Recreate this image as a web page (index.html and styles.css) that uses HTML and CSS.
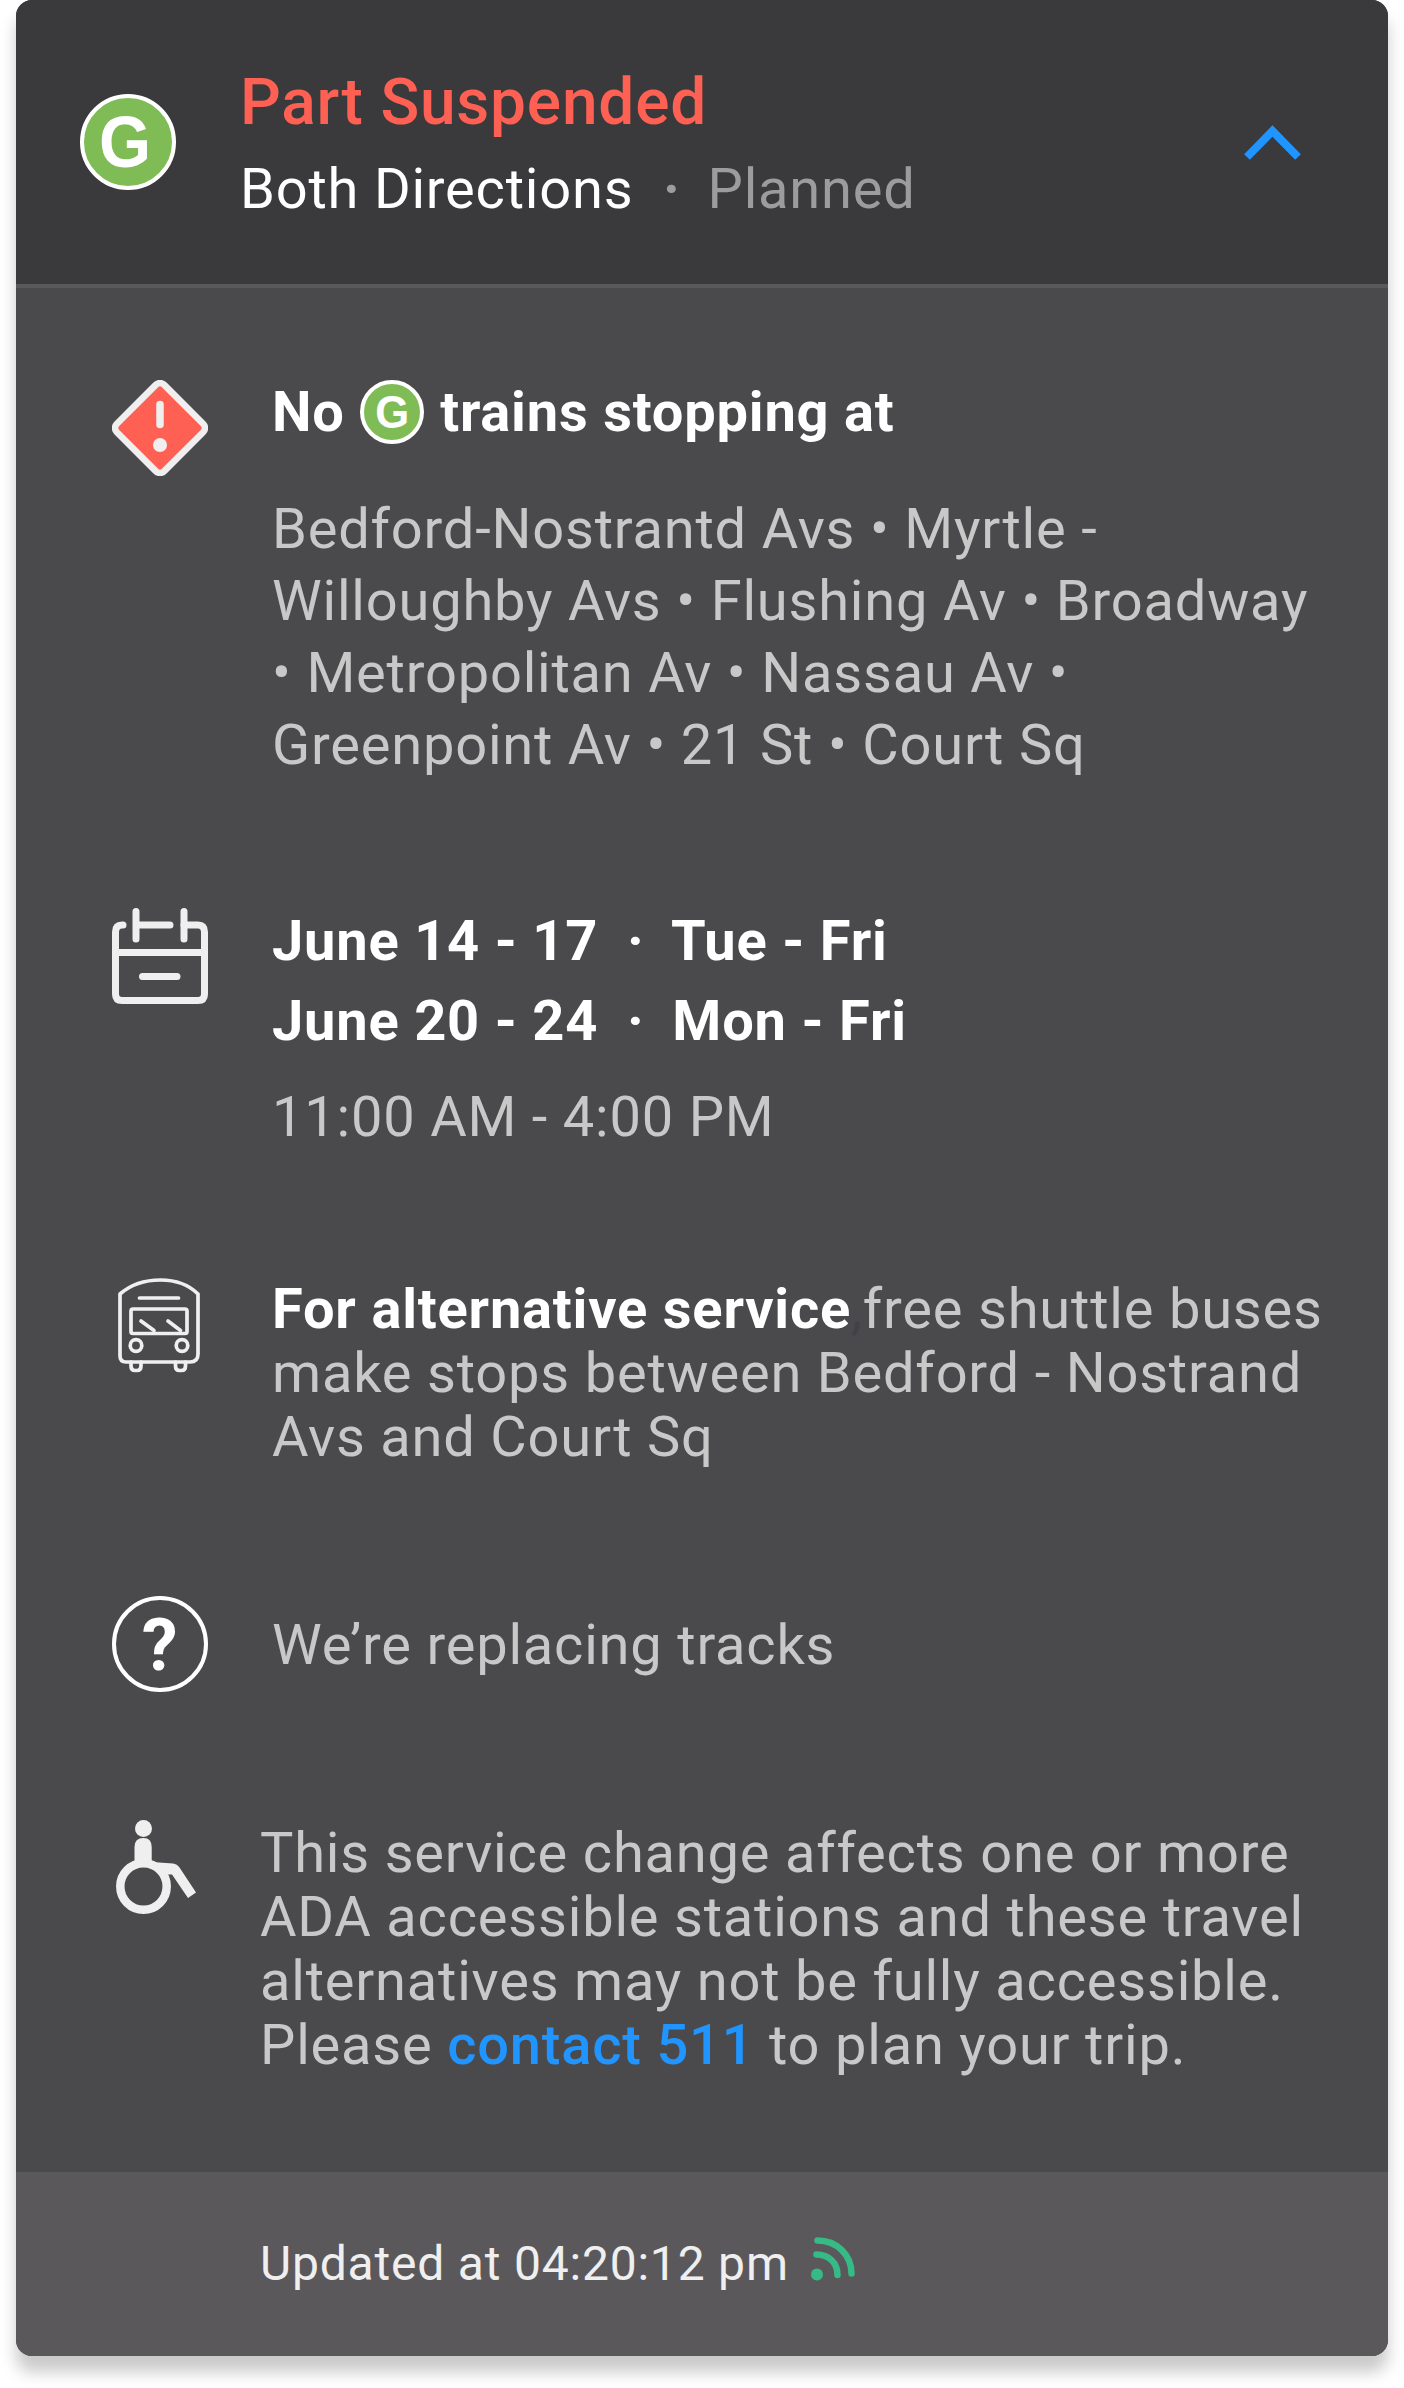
FILE: index.html
```html
<!DOCTYPE html>
<html lang="en">
<head>
    <meta charset="UTF-8">
    <meta name="viewport" content="width=device-width, initial-scale=1.0">
    <title>Service Status</title>
    <link rel="stylesheet" href="styles.css">
</head>
<body>
    <div class="card">
        <header class="card-header">
            <span class="badge"><span class="letter">G</span></span>
            <div class="header-text">
                <h1>Part Suspended</h1>
                <p class="direction">Both Directions <span class="dot">·</span> <span class="planned">Planned</span></p>
            </div>
            <svg class="chevron" width="58" height="36" viewBox="0 0 58 36" fill="none" stroke="#2094ff" stroke-width="8">
                <path d="M3 32 L28.5 6 L54 32"/>
            </svg>
        </header>

        <main class="card-body">
            <section class="row row-stations">
                <svg class="icon" width="96" height="96" viewBox="0 0 96 96">
                    <rect x="14.500" y="14.500" width="67" height="67" rx="6" transform="rotate(45 48 48)" fill="#ff6054" stroke="#efefef" stroke-width="6.600"/>
                    <path d="M48 24.500 V44.500" stroke="#efefef" stroke-width="7.500" stroke-linecap="round"/>
                    <circle cx="48" cy="65" r="7" fill="#efefef"/>
                </svg>
                <div class="text">
                    <h2>No <span class="badge badge-small"><span class="letter">G</span></span> trains stopping at</h2>
                    <p class="stations">Bedford-Nostrantd Avs • Myrtle -<br>Willoughby Avs • Flushing Av • Broadway<br>• Metropolitan Av • Nassau Av •<br>Greenpoint Av • 21 St • Court Sq</p>
                </div>
            </section>

            <section class="row row-dates">
                <svg class="icon" width="96" height="96" viewBox="0 0 96 96" fill="none" stroke="#efefef" stroke-width="7" stroke-linecap="round" stroke-linejoin="round">
                    <path d="M11 17 H10 Q3.500 17 3.500 24 V86 Q3.500 92.500 10 92.500 H86 Q92.500 92.500 92.500 86 V24 Q92.500 17 86 17 H72"/>
                    <path d="M24 3.500 V31 M24 17 H58 M72 3.500 V31 M3.500 44.500 H92.500 M30.500 68.500 H65"/>
                </svg>
                <div class="text">
                    <h2>June 14 - 17 <span class="dot">·</span> Tue - Fri</h2>
                    <h2>June 20 - 24 <span class="dot">·</span> Mon - Fri</h2>
                    <p class="time">11:00 AM - 4:00 PM</p>
                </div>
            </section>

            <section class="row row-bus">
                <svg class="icon" width="96" height="96" viewBox="0 0 96 96" fill="none" stroke="#efefef" stroke-width="3.700" stroke-linecap="round" stroke-linejoin="round">
                    <path d="M8 16 Q24 2 48.500 2 Q72 2 86 16 V76 Q86 84 78 84 H14 Q8 84 8 78 Z"/>
                    <path d="M27.500 20 H66.500"/>
                    <rect x="19" y="31" width="56" height="24.500" rx="2"/>
                    <path d="M29 43 L42 52.500 M56 43 L68.500 52.500"/>
                    <circle cx="24" cy="67.500" r="5.800"/>
                    <circle cx="70" cy="67.500" r="5.800"/>
                    <path d="M19 84 V88 Q19 92.500 23 92.500 H25 Q29 92.500 29 88 V84 M63.500 84 V88 Q63.500 92.500 67.500 92.500 H69.500 Q73.500 92.500 73.500 88 V84"/>
                </svg>
                <p class="text"><strong>For alternative service</strong><span class="comma">,</span>free shuttle buses<br>make stops between Bedford - Nostrand<br>Avs and Court Sq</p>
            </section>

            <section class="row row-reason">
                <span class="question">?</span>
                <p class="text">We’re replacing tracks</p>
            </section>

            <section class="row row-ada">
                <svg class="icon" width="96" height="96" viewBox="0 0 96 96" fill="#efefef">
                    <circle cx="31.500" cy="8.500" r="8.500"/>
                    <path d="M22.500 42 V27 Q22.500 18 31.500 18 Q39.700 18 39.700 27 V42 L61 43.500 Q65 44 67.500 47.500 L84 72.500 L76 78 L60 54.500 H54 Z"/>
                    <circle cx="31.500" cy="66.500" r="23.200" fill="#4a4a4c" stroke="#efefef" stroke-width="8.500"/>
                </svg>
                <p class="text">This service change affects one or more<br>ADA accessible stations and these travel<br>alternatives may not be fully accessible.<br>Please <a href="#">contact 511</a> to plan your trip.</p>
            </section>
        </main>

        <footer class="card-footer">
            <span>Updated at 04:20:12 pm</span>
            <svg class="live" width="44" height="46" viewBox="0 0 44 46" fill="none" stroke="#36ba86" stroke-width="6.500" stroke-linecap="round">
                <circle cx="6" cy="38.500" r="6" fill="#36ba86" stroke="none"/>
                <path d="M5.500 18.500 C18 18.500 26.500 27 26.500 39 M6.500 4.500 C26 4.500 40.500 19 40.500 37.500"/>
            </svg>
        </footer>
    </div>
</body>
</html>
```
FILE: styles.css
```css
* {
    box-sizing: border-box;
}

body {
    margin: 0;
    padding: 0 16px 32px;
    background-color: #fff;
    font-family: Roboto, sans-serif;
    font-size: 56px;
    line-height: 64px;
    letter-spacing: 0.8px;
}

h1, h2, p {
    margin: 0;
}

.card {
    height: 2356px;
    display: flex;
    flex-direction: column;
    border-radius: 16px;
    overflow: hidden;
    background-color: #4a4a4c;
    box-shadow: 0 16px 16px rgba(0, 0, 0, 0.21);
}

.card-header {
    display: flex;
    align-items: flex-start;
    height: 288px;
    padding: 63px 86px 0 64px;
    background-color: #3a3a3c;
    border-bottom: 4px solid #5a585b;
}

.badge {
    display: inline-flex;
    justify-content: center;
    align-items: center;
    flex: none;
    width: 96px;
    height: 96px;
    margin-top: 31px;
    padding-right: 5px;
    border: 4px solid #fff;
    border-radius: 50%;
    background-color: #7fbc55;
    color: #fff;
    font-family: "Liberation Sans", Arial, sans-serif;
    font-size: 72px;
    font-weight: bold;
    letter-spacing: 0;
}

.letter {
    transform: scaleX(0.93);
}

.badge-small {
    width: 64px;
    height: 64px;
    margin: 0 1px;
    padding-right: 0;
    font-size: 47px;
    vertical-align: top;
}

.header-text {
    flex: 1;
    margin-left: 64px;
}

h1 {
    font-size: 64px;
    font-weight: 500;
    line-height: 80px;
    color: #ff6054;
}

.direction {
    margin-top: 14px;
    color: #fff;
}

.dot {
    margin: 0 13px 0 14px;
}

.direction .dot {
    margin: 0 12px 0 15px;
    font-weight: bold;
}

.direction .dot, .planned {
    color: #9c9c9f;
}

.chevron {
    margin-top: 62px;
}

.card-body {
    flex: 1;
    color: #c8c8c8;
}

.row {
    display: flex;
    align-items: flex-start;
    padding-left: 96px;
}

.icon {
    flex: none;
}

.text {
    margin-left: 64px;
    white-space: nowrap;
}

h2, strong {
    font-size: 56px;
    font-weight: bold;
    color: #fff;
}

.row-stations {
    padding-top: 92px;
}

.stations {
    margin-top: 49px;
    line-height: 72px;
}

.row-dates {
    padding-top: 127px;
}

.row-dates h2 {
    line-height: 80px;
}

.row-dates .text {
    margin-top: -7px;
}

.time {
    margin-top: 24px;
}

.row-bus {
    padding-top: 129px;
}

.row-bus .text {
    margin-top: -1px;
}

.comma {
    color: #3f4246;
}

.row-reason {
    padding-top: 127px;
}

.row-reason .text {
    margin-top: 17px;
}

.question {
    flex: none;
    width: 96px;
    height: 96px;
    border: 4px solid #fff;
    border-radius: 50%;
    color: #fff;
    font-size: 72px;
    font-weight: bold;
    line-height: 91px;
    text-align: center;
}

.row-ada {
    padding-top: 128px;
}

.row-ada .text {
    margin-top: 1px;
    margin-left: 52px;
}

a {
    color: #2094ff;
    font-weight: 500;
    text-decoration: none;
}

.card-footer {
    display: flex;
    align-items: center;
    height: 184px;
    padding-left: 244px;
    background-color: #5b585b;
    color: #efefef;
    font-size: 48px;
}

.live {
    margin: 0 0 10px 22px;
}
```
